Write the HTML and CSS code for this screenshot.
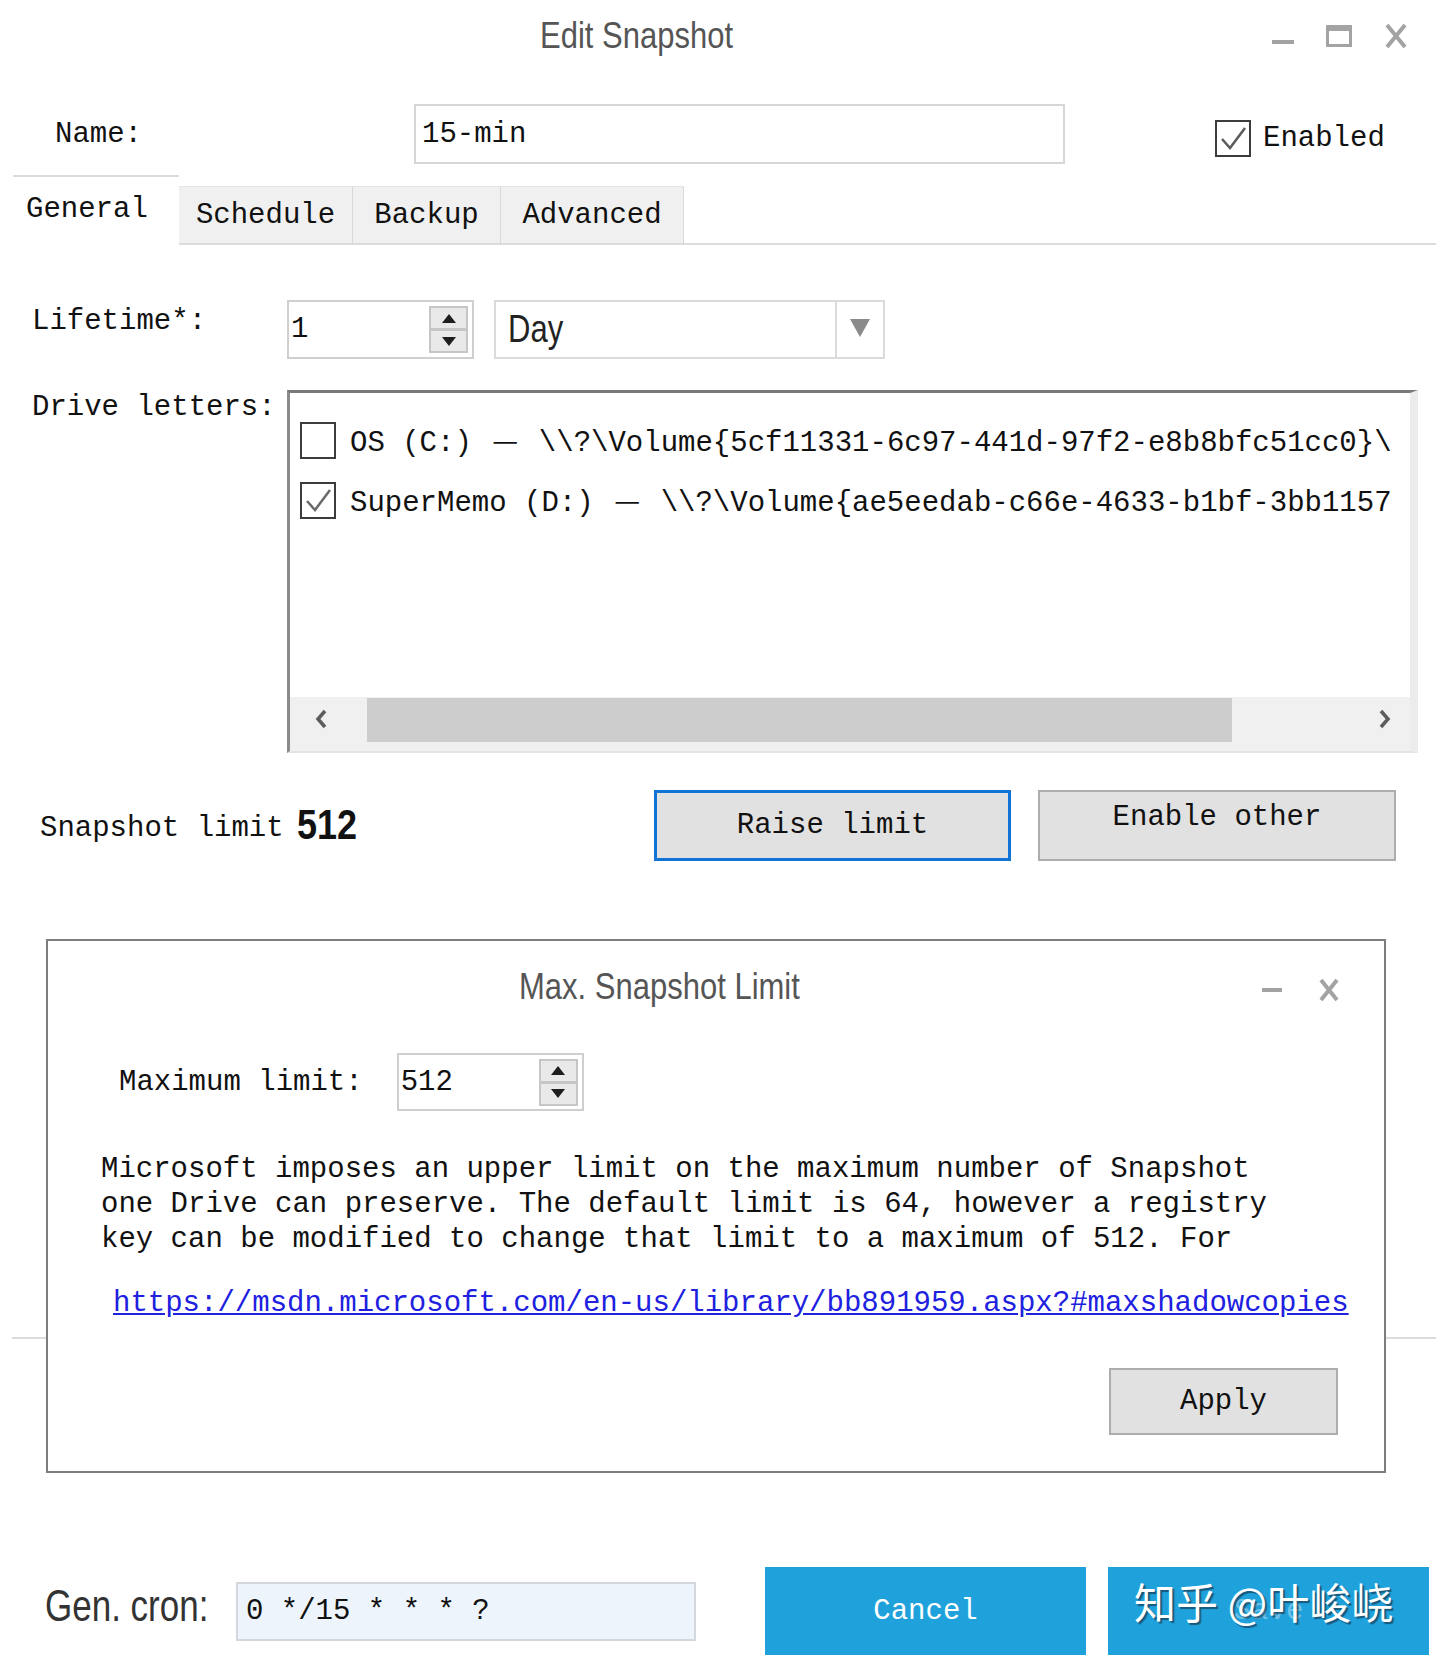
FILE: index.html
```html
<!DOCTYPE html>
<html lang="en">
<head>
<meta charset="utf-8">
<title>Edit Snapshot</title>
<link rel="stylesheet" href="styles.css">
</head>
<body>
<div class="app">
  <header class="titlebar">
    <div class="title">Edit Snapshot</div>
    <div class="win-controls">
      <svg class="ctl" width="22" height="22" viewBox="0 0 22 22"><rect x="0" y="15" width="22" height="4" fill="#a3a3a3"/></svg>
      <svg class="ctl" width="26" height="22" viewBox="0 0 26 22"><rect x="1.5" y="1.5" width="23" height="19" fill="none" stroke="#a3a3a3" stroke-width="3"/><rect x="1" y="1" width="24" height="5" fill="#a3a3a3"/></svg>
      <svg class="ctl" width="24" height="26" viewBox="0 0 24 26"><path d="M3 2 L21 24 M21 2 L3 24" stroke="#a3a3a3" stroke-width="4"/></svg>
    </div>
  </header>

  <div class="name-row">
    <div class="lbl name-lbl">Name:</div>
    <div class="textbox name-input">15-min</div>
    <div class="check-wrap">
      <span class="checkbox"><svg width="32" height="33" viewBox="0 0 32 33"><path d="M5 17 L13 26 L28 6" fill="none" stroke="#5a5a5a" stroke-width="2.5"/></svg></span>
      <span class="lbl">Enabled</span>
    </div>
  </div>

  <nav class="tabs">
    <div class="tab tab-active">General</div>
    <div class="tab tab-schedule">Schedule</div>
    <div class="tab tab-backup">Backup</div>
    <div class="tab tab-advanced">Advanced</div>
    <div class="tab-fill"></div>
  </nav>

  <div class="form">
    <div class="lbl form-lbl lbl-lifetime">Lifetime*:</div>
    <div class="lifetime-ctrls">
      <div class="spin">
        <span class="spin-val">1</span>
        <span class="spin-btns">
          <span class="spin-up"><svg width="14" height="9" viewBox="0 0 14 9"><path d="M7 0 L14 9 L0 9 Z" fill="#1e1e1e"/></svg></span>
          <span class="spin-down"><svg width="14" height="9" viewBox="0 0 14 9"><path d="M0 0 L14 0 L7 9 Z" fill="#1e1e1e"/></svg></span>
        </span>
      </div>
      <div class="select">
        <span class="select-val"><span class="tall">Day</span></span>
        <span class="select-arrow"><svg width="20" height="18" viewBox="0 0 20 18"><path d="M0 0 L20 0 L10 18 Z" fill="#8a8a8a"/></svg></span>
      </div>
    </div>

    <div class="lbl form-lbl">Drive letters:</div>
    <div class="listbox">
      <div class="lb-row">
        <span class="checkbox"></span>
        <span class="lbl">OS (C:) <span class="dash">—</span> \\?\Volume{5cf11331-6c97-441d-97f2-e8b8bfc51cc0}\</span>
      </div>
      <div class="lb-row">
        <span class="checkbox"><svg width="32" height="33" viewBox="0 0 32 33"><path d="M5 17 L13 26 L28 6" fill="none" stroke="#6a6a6a" stroke-width="2.5"/></svg></span>
        <span class="lbl">SuperMemo (D:) <span class="dash">—</span> \\?\Volume{ae5eedab-c66e-4633-b1bf-3bb1157</span>
      </div>
      <div class="hscroll">
        <span class="hs-arrow hs-left"><svg width="14" height="22" viewBox="0 0 14 22"><path d="M11 3 L4 11 L11 19" fill="none" stroke="#5c5c5c" stroke-width="3.5"/></svg></span>
        <span class="hs-thumb"></span>
        <span class="hs-space"></span>
        <span class="hs-arrow hs-right"><svg width="14" height="22" viewBox="0 0 14 22"><path d="M3 3 L10 11 L3 19" fill="none" stroke="#5c5c5c" stroke-width="3.5"/></svg></span>
      </div>
    </div>
  </div>

  <div class="limit-row">
    <div class="lbl">Snapshot limit <b class="limit-num">512</b></div>
    <div class="btn-group">
      <div class="btn btn-focus">Raise limit</div>
      <div class="btn btn-enable">Enable other</div>
    </div>
  </div>

  <div class="sep"></div>

  <div class="bottom-row">
    <div class="cron-lbl"><span class="tall">Gen. cron:</span></div>
    <div class="textbox cron-input">0 */15 * * * ?</div>
    <div class="btn-blue btn-cancel">Cancel</div>
    <div class="btn-blue btn-save"><span class="save-txt">Save</span><span class="watermark">知乎 @叶峻峣</span></div>
  </div>

  <section class="dialog">
    <div class="dlg-head">
      <div class="dlg-title">Max. Snapshot Limit</div>
      <div class="dlg-ctrls">
        <svg width="20" height="20" viewBox="0 0 20 20"><rect x="0" y="8" width="20" height="4" fill="#a3a3a3"/></svg>
        <svg width="22" height="24" viewBox="0 0 22 24"><path d="M3 2 L19 22 M19 2 L3 22" stroke="#a3a3a3" stroke-width="4"/></svg>
      </div>
    </div>
    <div class="dlg-max-row">
      <span class="lbl">Maximum limit:</span>
      <div class="spin spin-max">
        <span class="spin-val">512</span>
        <span class="spin-btns">
          <span class="spin-up"><svg width="14" height="9" viewBox="0 0 14 9"><path d="M7 0 L14 9 L0 9 Z" fill="#1e1e1e"/></svg></span>
          <span class="spin-down"><svg width="14" height="9" viewBox="0 0 14 9"><path d="M0 0 L14 0 L7 9 Z" fill="#1e1e1e"/></svg></span>
        </span>
      </div>
    </div>
    <p class="dlg-text">Microsoft imposes an upper limit on the maximum number of Snapshot one Drive can preserve. The default limit is 64, however a registry key can be modified to change that limit to a maximum of 512. For</p>
    <a class="dlg-link" href="#">https://msdn.microsoft.com/en-us/library/bb891959.aspx?#maxshadowcopies</a>
    <div class="dlg-actions">
      <div class="btn btn-apply">Apply</div>
    </div>
  </section>
</div>
</body>
</html>
```

FILE: styles.css
```css
html, body {
  margin: 0;
  padding: 0;
  background: #fff;
}

.app {
  position: relative;
  width: 1440px;
  height: 1667px;
  overflow: hidden;
  font-family: "Liberation Mono", "DejaVu Sans Mono", monospace;
  font-size: 29px;
  line-height: 35px;
  color: #111;
}

.lbl {
  font-family: "Liberation Mono", "DejaVu Sans Mono", monospace;
  font-size: 29px;
  line-height: 35px;
  color: #111;
  white-space: nowrap;
}

/* narrow, tall sans text of the original */
.tall {
  display: inline-block;
  transform: scaleY(1.25);
  transform-origin: 50% 55%;
}

/* title bar */
.titlebar {
  display: flex;
  align-items: center;
  height: 72px;
  padding-left: 540px;
  padding-right: 32px;
}
.title {
  font-family: "Liberation Sans", Arial, sans-serif;
  font-size: 31px;
  color: #555;
  line-height: 40px;
  white-space: nowrap;
  transform: scaleY(1.22);
}
.win-controls {
  margin-left: auto;
  display: flex;
  align-items: center;
  gap: 32px;
}

/* name row */
.name-row {
  display: flex;
  align-items: center;
  height: 60px;
  margin-top: 32px;
  padding-left: 55px;
}
.name-lbl {
  width: 359px;
}
.textbox {
  box-sizing: border-box;
  border: 2px solid #d6d6d6;
  background: #fff;
  display: flex;
  align-items: center;
  white-space: nowrap;
}
.name-input {
  width: 651px;
  height: 60px;
  padding-left: 6px;
}
.check-wrap {
  display: flex;
  align-items: center;
  gap: 12px;
  margin-left: 150px;
  margin-top: 8px;
}
.checkbox {
  box-sizing: border-box;
  width: 36px;
  height: 37px;
  border: 2px solid #3c3c3c;
  background: #fff;
  display: flex;
  align-items: center;
  justify-content: center;
  flex-shrink: 0;
}

/* tabs */
.tabs {
  display: flex;
  align-items: flex-end;
  height: 70px;
  margin-top: 11px;
  padding-left: 13px;
  padding-right: 4px;
}
.tab {
  box-sizing: border-box;
  height: 59px;
  display: flex;
  align-items: center;
  justify-content: center;
  background: #f0f0f0;
  border-top: 1px solid #e4e4e4;
  border-right: 1px solid #d8d8d8;
  border-bottom: 2px solid #dcdcdc;
  white-space: nowrap;
}
.tab-active {
  width: 166px;
  height: 70px;
  background: #fff;
  border-top: 2px solid #dcdcdc;
  border-right: none;
  border-bottom: none;
  justify-content: flex-start;
  padding-left: 13px;
  padding-bottom: 4px;
}
.tab-schedule { width: 174px; }
.tab-backup { width: 148px; }
.tab-advanced { width: 183px; }
.tab-fill {
  flex: 1;
  border-bottom: 2px solid #dcdcdc;
}

/* form */
.form {
  display: grid;
  grid-template-columns: 255px 1131px;
  row-gap: 31px;
  margin-top: 55px;
  padding-left: 32px;
}
.lbl-lifetime {
  padding-top: 4px;
}
.lifetime-ctrls {
  display: flex;
  gap: 20px;
}
.spin {
  box-sizing: border-box;
  width: 187px;
  height: 59px;
  border: 2px solid #cfcfcf;
  display: flex;
  align-items: center;
  padding: 0 4px 0 2px;
}
.spin-val {
  flex: 1;
}
.spin-btns {
  box-sizing: border-box;
  width: 39px;
  height: 47px;
  background: #e9e9e9;
  border: 2px solid #c6c6c6;
  display: flex;
  flex-direction: column;
}
.spin-up, .spin-down {
  flex: 1;
  display: flex;
  align-items: center;
  justify-content: center;
}
.spin-up {
  border-bottom: 3px solid #c6c6c6;
}
.select {
  box-sizing: border-box;
  width: 391px;
  height: 59px;
  border: 2px solid #dadada;
  display: flex;
  align-items: center;
}
.select-val {
  flex: 1;
  padding-left: 12px;
  font-family: "Liberation Sans", Arial, sans-serif;
  font-size: 31px;
  color: #222;
}
.select-arrow {
  width: 48px;
  align-self: stretch;
  border-left: 2px solid #dadada;
  display: flex;
  align-items: center;
  justify-content: center;
  padding-bottom: 4px;
  box-sizing: border-box;
}

/* list box */
.listbox {
  box-sizing: border-box;
  height: 363px;
  border-top: 3px solid #7a7a7a;
  border-left: 3px solid #8a8a8a;
  border-right: 8px solid #ececec;
  border-bottom: 2px solid #e4e4e4;
  padding-top: 29px;
  display: flex;
  flex-direction: column;
  overflow: hidden;
}
.lb-row {
  display: flex;
  align-items: center;
  gap: 14px;
  height: 37px;
  margin-bottom: 23px;
  padding-left: 10px;
  white-space: nowrap;
}
.dash {
  display: inline-block;
  width: 2ch;
  text-align: center;
  font-family: "Noto Sans CJK SC", sans-serif;
}
.hscroll {
  margin-top: auto;
  height: 54px;
  flex-shrink: 0;
  background: #f0f0f0;
  display: flex;
  align-items: flex-start;
}
.hs-arrow {
  height: 44px;
  display: flex;
  align-items: center;
}
.hs-left {
  width: 77px;
  padding-left: 24px;
  box-sizing: border-box;
}
.hs-right {
  width: 50px;
  justify-content: center;
}
.hs-thumb {
  width: 865px;
  height: 44px;
  margin-top: 1px;
  background: #cdcdcd;
}
.hs-space {
  flex: 1;
}

/* limit row */
.limit-row {
  display: flex;
  align-items: center;
  height: 71px;
  margin-top: 37px;
  padding: 0 44px 0 40px;
}
.limit-num {
  display: inline-block;
  font-family: "Liberation Sans", Arial, sans-serif;
  font-weight: bold;
  font-size: 36px;
  color: #111;
  transform: scaleY(1.2);
  margin-left: -4px;
}
.btn-group {
  margin-left: auto;
  display: flex;
  gap: 27px;
}
.btn {
  box-sizing: border-box;
  width: 357px;
  height: 71px;
  background: #e1e1e1;
  border: 2px solid #adadad;
  display: flex;
  align-items: center;
  justify-content: center;
  white-space: nowrap;
}
.btn-focus {
  border: 3px solid #1273d6;
}
.btn-enable {
  width: 358px;
  align-items: flex-start;
  padding-top: 8px;
}

.sep {
  height: 2px;
  background: #dcdcdc;
  margin: 476px 4px 0 12px;
}

/* bottom row */
.bottom-row {
  display: flex;
  align-items: center;
  height: 88px;
  margin-top: 228px;
  padding-left: 45px;
}
.cron-lbl {
  width: 191px;
  font-family: "Liberation Sans", Arial, sans-serif;
  font-size: 35px;
  color: #333;
  white-space: nowrap;
  padding-bottom: 12px;
}
.cron-input {
  width: 460px;
  height: 59px;
  padding-left: 8px;
  background: #edf4fb;
  border-color: #d4d8dc;
}
.btn-blue {
  position: relative;
  box-sizing: border-box;
  width: 321px;
  height: 88px;
  background: #1fa2dc;
  color: #fff;
  display: flex;
  align-items: center;
  justify-content: center;
}
.btn-cancel {
  margin-left: 69px;
}
.btn-save {
  margin-left: 22px;
}
.save-txt {
  color: rgba(255, 255, 255, 0.35);
}
.watermark {
  position: absolute;
  left: 26px;
  top: 8px;
  font-family: "Noto Sans CJK SC", sans-serif;
  font-size: 42px;
  line-height: 52px;
  color: #fff;
  white-space: nowrap;
  text-shadow: 2px 2px 1px rgba(20, 40, 60, 0.6);
}

/* dialog overlay */
.dialog {
  position: absolute;
  left: 46px;
  top: 939px;
  width: 1340px;
  height: 534px;
  box-sizing: border-box;
  border: 2px solid #7d7d7d;
  background: #fff;
  display: flex;
  flex-direction: column;
}
.dlg-head {
  display: flex;
  align-items: center;
  height: 90px;
  padding-left: 471px;
  padding-right: 44px;
}
.dlg-title {
  font-family: "Liberation Sans", Arial, sans-serif;
  font-size: 31px;
  color: #555;
  white-space: nowrap;
  transform: scaleY(1.22);
}
.dlg-ctrls {
  margin-left: auto;
  display: flex;
  align-items: center;
  gap: 36px;
  margin-top: 8px;
}
.dlg-max-row {
  display: flex;
  align-items: center;
  gap: 34px;
  height: 58px;
  margin-top: 22px;
  padding-left: 71px;
}
.spin-max {
  height: 58px;
}
.dlg-text {
  margin: 41px 0 0 53px;
  width: 68ch;
  font-size: 29px;
  line-height: 35px;
}
.dlg-link {
  display: block;
  margin: 29px 0 0 65px;
  color: #2020e0;
  text-decoration: underline;
  white-space: nowrap;
}
.dlg-actions {
  display: flex;
  justify-content: flex-end;
  margin-top: 47px;
  padding-right: 46px;
}
.btn-apply {
  width: 229px;
  height: 67px;
}
```
